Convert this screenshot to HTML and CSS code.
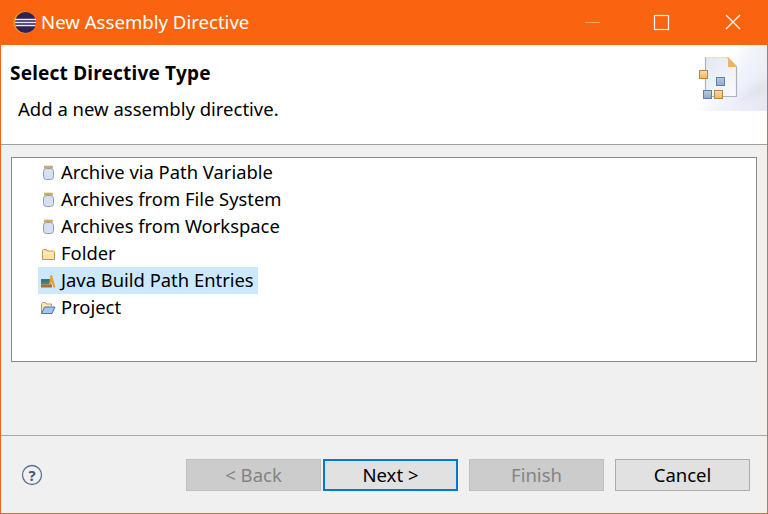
FILE: index.html
```html
<!DOCTYPE html>
<html lang="en">
<head>
  <meta charset="UTF-8" />
  <title>New Assembly Directive</title>
  <link rel="stylesheet" href="styles.css">
</head>
<body>
  <div class="window">
    <div class="titlebar">
      <svg class="app-icon" width="24" height="24" viewBox="0 0 24 24">
        <circle cx="11.500" cy="11.500" r="11" fill="#f7941e"/>
        <circle cx="12.500" cy="11.500" r="10.500" fill="#2c2255"/>
        <path d="M2 8.500h21M2 11.500h21M2.500 14.500h20" stroke="#e8e6f2" stroke-width="1.600"/>
      </svg>
      <span class="title">New Assembly Directive</span>
      <div class="controls">
        <svg width="46" height="45" viewBox="0 0 46 45"><path d="M22 22.500h15" stroke="#fda06a" stroke-width="1"/></svg>
        <svg width="46" height="45" viewBox="0 0 46 45"><rect x="20.500" y="15.500" width="14" height="14" fill="none" stroke="#fff" stroke-width="1.200"/></svg>
        <svg width="46" height="45" viewBox="0 0 46 45"><path d="M21 15l14 14M35 15L21 29" stroke="#fff" stroke-width="1.200"/></svg>
      </div>
    </div>

    <div class="banner">
      <div class="banner-text">
        <h1>Select Directive Type</h1>
        <p>Add a new assembly directive.</p>
      </div>
      <svg class="banner-art" width="76" height="66" viewBox="0 0 76 66">
        <defs>
          <linearGradient id="wash" x1="0" y1="0.300" x2="1" y2="0.900">
            <stop offset="0" stop-color="#fff"/>
            <stop offset="0.550" stop-color="#eef1fa"/>
            <stop offset="1" stop-color="#d8e0f4"/>
          </linearGradient>
          <linearGradient id="page" x1="0" y1="0" x2="1" y2="1">
            <stop offset="0" stop-color="#e1e7f3"/>
            <stop offset="1" stop-color="#fbfcfe"/>
          </linearGradient>
          <linearGradient id="orange" x1="0" y1="0" x2="0" y2="1">
            <stop offset="0" stop-color="#ffdca6"/>
            <stop offset="1" stop-color="#fdb54e"/>
          </linearGradient>
          <linearGradient id="blue" x1="0" y1="0" x2="0" y2="1">
            <stop offset="0" stop-color="#b9c7de"/>
            <stop offset="1" stop-color="#94a9cb"/>
          </linearGradient>
          <filter id="soft" filterUnits="userSpaceOnUse" x="-30" y="-30" width="140" height="130">
            <feGaussianBlur stdDeviation="5"/>
          </filter>
        </defs>
        <path d="M-4 80C24 58 48 24 60 -20h40v100z" fill="url(#wash)" filter="url(#soft)"/>
        <path d="M44 54c10-2 20-12 32-18v9c-10 4-20 10-30 11z" fill="#d4d2e0" opacity="0.700" filter="url(#soft)"/>
        <path d="M14.500 12.500h22l9 9v30h-31z" fill="url(#page)" stroke="#a9b3b8" stroke-width="1.200"/>
        <path d="M14.500 12.500h22" stroke="#e8e2c4" stroke-width="1.200"/>
        <path d="M37 12l9 10h-9z" fill="#eeb466"/>
        <rect x="8.500" y="25.500" width="8" height="8" fill="url(#orange)" stroke="#bd8242"/>
        <rect x="25.500" y="32.500" width="8" height="8" fill="url(#blue)" stroke="#5f7fb0"/>
        <rect x="12.500" y="45.500" width="8" height="8" fill="url(#blue)" stroke="#5f7fb0"/>
        <rect x="23.500" y="45.500" width="8" height="8" fill="url(#orange)" stroke="#bd8242"/>
      </svg>
    </div>

    <div class="content">
      <div class="tree">
        <div class="row">
          <svg width="14" height="16" viewBox="0 0 14 16"><rect x="3.500" y="3.500" width="10" height="11" rx="3" fill="#d6e0ef" stroke="#8a9dba"/><rect x="4.500" y="1" width="8" height="2" fill="#d9b45c" stroke="#b8923e" stroke-width="0.500"/></svg>
          <span>Archive via Path Variable</span>
        </div>
        <div class="row">
          <svg width="14" height="16" viewBox="0 0 14 16"><rect x="3.500" y="3.500" width="10" height="11" rx="3" fill="#d6e0ef" stroke="#8a9dba"/><rect x="4.500" y="1" width="8" height="2" fill="#d9b45c" stroke="#b8923e" stroke-width="0.500"/></svg>
          <span>Archives from File System</span>
        </div>
        <div class="row">
          <svg width="14" height="16" viewBox="0 0 14 16"><rect x="3.500" y="3.500" width="10" height="11" rx="3" fill="#d6e0ef" stroke="#8a9dba"/><rect x="4.500" y="1" width="8" height="2" fill="#d9b45c" stroke="#b8923e" stroke-width="0.500"/></svg>
          <span>Archives from Workspace</span>
        </div>
        <div class="row">
          <svg class="wide" width="16" height="16" viewBox="0 0 16 16"><path d="M2.500 13.500v-9l1-1h3l1 1.500h6l1 1v7.500z" fill="#fde2a4" stroke="#cf9444" stroke-linejoin="round"/><path d="M3.500 7h10" stroke="#fff4d6"/></svg>
          <span>Folder</span>
        </div>
        <div class="row selected">
          <svg class="wide" width="16" height="16" viewBox="0 0 16 16">
            <rect x="1" y="6" width="10" height="3" fill="#3d6f8f"/>
            <rect x="1" y="9" width="10" height="2.500" fill="#4f8a55"/>
            <rect x="1" y="11.500" width="11" height="3" fill="#b5673c"/>
            <path d="M10.500 2h1.500l3.500 12.500h-2L11.500 9l-1.500 2.500H9z" fill="#e8a02a"/>
          </svg>
          <span>Java Build Path Entries</span>
        </div>
        <div class="row">
          <svg class="wide" width="16" height="16" viewBox="0 0 16 16"><path d="M1.500 13.500v-10l1-1h3l1 1.500h5v2" fill="#fde9b8" stroke="#b79a68"/><path d="M1.500 13.500l3-6.500h10.500l-3 6.500z" fill="#a9c3ea" stroke="#4c6fae" stroke-linejoin="round"/></svg>
          <span>Project</span>
        </div>
      </div>
    </div>

    <div class="footer">
      <svg class="help" width="22" height="22" viewBox="0 0 22 22">
        <circle cx="11" cy="11" r="9.500" fill="none" stroke="#5c7199" stroke-width="1.300"/>
        <text x="11" y="16.500" text-anchor="middle" class="help-mark">?</text>
      </svg>
      <div class="buttons">
        <button class="btn disabled">&lt; Back</button>
        <button class="btn default">Next &gt;</button>
        <button class="btn disabled finish">Finish</button>
        <button class="btn cancel">Cancel</button>
      </div>
    </div>
  </div>
</body>
</html>
```

FILE: styles.css
```css
body, html {
  margin: 0;
  padding: 0;
  font-family: "Noto Sans", "Open Sans", sans-serif;
  color: #000;
  background-color: #f0f0f0;
}

.window {
  width: 768px;
  height: 514px;
  box-sizing: border-box;
  border: 1px solid #f96511;
  border-top: none;
  display: flex;
  flex-direction: column;
  overflow: hidden;
}

.titlebar {
  height: 45px;
  margin: 0 -1px;
  flex: none;
  background: #fa6410;
  color: white;
  display: flex;
  align-items: center;
  padding-left: 13px;
}

.app-icon {
  flex: none;
}

.title {
  margin: 0 0 2px 4px;
  font-size: 18.600px;
}

.controls {
  margin-left: auto;
  display: flex;
  padding-right: 17px;
  gap: 25px;
}

.banner {
  height: 100px;
  box-sizing: border-box;
  flex: none;
  background: white;
  border-bottom: 1px solid #a0a0a0;
  display: flex;
  justify-content: space-between;
  align-items: flex-start;
}

.banner h1 {
  margin: 16px 0 0 9px;
  font-size: 19px;
  letter-spacing: 0.200px;
  line-height: 24px;
  font-weight: bold;
}

.banner p {
  margin: 12px 0 0 17px;
  font-size: 18.500px;
  line-height: 24px;
}

.content {
  flex: 1;
  padding: 12px 10px 0;
}

.tree {
  height: 205px;
  box-sizing: border-box;
  background: white;
  border: 1px solid #8a8a8a;
  padding: 1px 0 0 26px;
  display: flex;
  flex-direction: column;
  align-items: flex-start;
}

.row {
  height: 27px;
  display: flex;
  align-items: center;
  gap: 7px;
  padding: 0 4px 0 2px;
  font-size: 18.400px;
}

.row span {
  margin-bottom: 2px;
}

.row svg {
  flex: none;
}

.row .wide {
  margin-right: -2px;
}

.selected {
  background: #cce8ff;
}

.footer {
  height: 78px;
  box-sizing: border-box;
  flex: none;
  border-top: 1px solid #a9a9a9;
  display: flex;
  align-items: center;
  justify-content: space-between;
  padding: 0 17px 0 20px;
}

.help-mark {
  font-size: 15px;
  font-weight: bold;
  fill: #46587f;
}

.buttons {
  display: flex;
  gap: 2px;
  margin-top: 1px;
}

.btn {
  width: 135px;
  height: 32px;
  padding: 0 0 2px;
  box-sizing: border-box;
  font-family: inherit;
  font-size: 18.500px;
  background: #e1e1e1;
  border: 1px solid #adadad;
  color: #000;
}

.disabled {
  background: #cccccc;
  border-color: #bfbfbf;
  color: #838383;
}

.default {
  border: 2px solid #0078d7;
}

.finish {
  margin-left: 9px;
}

.cancel {
  margin-left: 9px;
}
```
